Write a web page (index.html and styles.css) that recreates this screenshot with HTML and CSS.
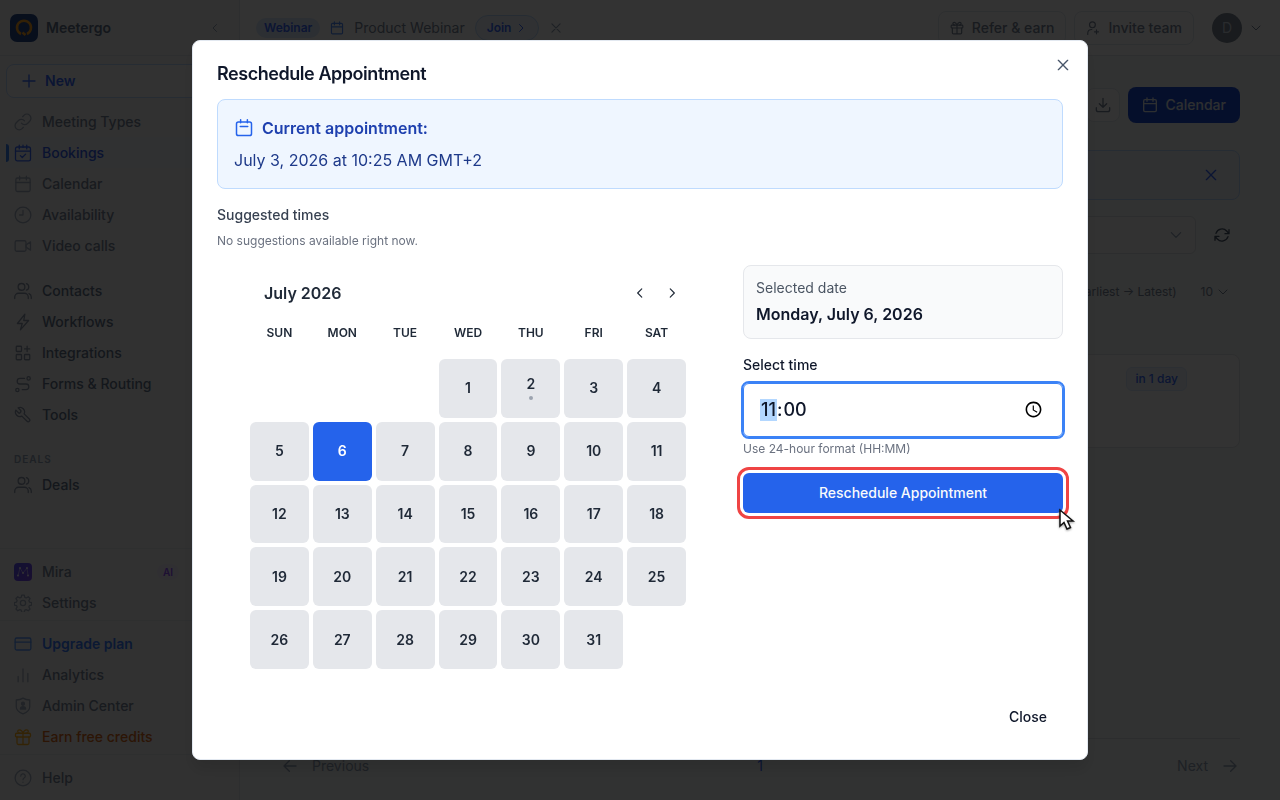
FILE: index.html
```
<!DOCTYPE html>
<html lang="en">
<head>
    <meta charset="UTF-8">
    <meta name="viewport" content="width=device-width, initial-scale=1.0">
    <title>Meetergo - Bookings</title>
    <link rel="stylesheet" href="styles.css">
</head>
<body>
    <!-- icon set -->
    <svg class="sprite" aria-hidden="true">
        <symbol id="i-link" viewBox="0 0 24 24"><path d="M10 13.500a5.500 5.500 0 0 0 8 .5l3-3a5.500 5.500 0 0 0-7.800-7.800l-1.700 1.700M14 10.500a5.500 5.500 0 0 0-8-.5l-3 3a5.500 5.500 0 0 0 7.800 7.800l1.700-1.700"/></symbol>
        <symbol id="i-cal" viewBox="0 0 24 24"><rect x="2.500" y="4" width="19" height="18" rx="2"/><path d="M2.500 10h19M7.500 1.500v5M16.500 1.500v5"/></symbol>
        <symbol id="i-calcheck" viewBox="0 0 24 24"><rect x="2" y="4" width="20" height="18.500" rx="2.500"/><path d="M2 9.500h20M7 1.500v5M12 1.500v3M17 1.500v5M8.500 15.500l2.500 2.500 4.500-4.500"/></symbol>
        <symbol id="i-calday" viewBox="0 0 24 24"><rect x="2" y="4" width="20" height="18" rx="2.500"/><path d="M7.500 1v4M16.500 1v4M7 10h10"/></symbol>
        <symbol id="i-clock" viewBox="0 0 24 24"><circle cx="12" cy="12" r="10.500"/><path d="M12 6v6H7.500"/></symbol>
        <symbol id="i-video" viewBox="0 0 24 24"><rect x="1.500" y="5" width="14.500" height="14" rx="2"/><path d="M16 10.500l6-4v11l-6-4z"/></symbol>
        <symbol id="i-users" viewBox="0 0 24 24"><circle cx="10" cy="6.500" r="4.500"/><path d="M1 22v-2a5 5 0 0 1 5-5h8a5 5 0 0 1 5 5v2M16.500 2.200a4.500 4.500 0 0 1 0 8.600M23 22v-2a5 5 0 0 0-3-4.500"/></symbol>
        <symbol id="i-bolt" viewBox="0 0 24 24"><path d="M14.500 1.500L4.500 14H11l-2.500 8.500L19.500 10H13z"/></symbol>
        <symbol id="i-grid" viewBox="0 0 24 24"><rect x="3" y="3" width="7" height="7" rx="1"/><rect x="3" y="14" width="7" height="7" rx="1"/><rect x="14" y="14" width="7" height="7" rx="1"/><path d="M17.500 3v7M14 6.500h7"/></symbol>
        <symbol id="i-route" viewBox="0 0 24 24"><circle cx="4.500" cy="20" r="2.200"/><circle cx="19.500" cy="4.500" r="2.200"/><path d="M14 4.500H8a3.700 3.700 0 0 0 0 7.500h8a3.700 3.700 0 0 1 0 7.500h-5"/></symbol>
        <symbol id="i-wrench" viewBox="0 0 24 24"><path d="M9.300 6.300a1 1 0 0 0 0 1.400l-1.600 1.600a1 1 0 0 1-1.400 0L2.500 5.500a6 6 0 0 0 8 8l6.900 6.900a2.100 2.100 0 0 0 3-3l-6.900-6.900a6 6 0 0 0-8-8z"/></symbol>
        <symbol id="i-gear" viewBox="0 0 24 24"><circle cx="12" cy="12" r="3.500"/><path d="M10.300 1.500h3.400l.7 3 1.900.8 2.700-1.600 2.400 2.400-1.600 2.600.8 2 3 .7v3.300l-3 .7-.8 1.900 1.600 2.700-2.400 2.400-2.700-1.600-1.900.8-.7 3h-3.400l-.7-3-1.900-.8-2.700 1.600-2.400-2.400 1.600-2.700-.8-1.900-3-.7v-3.300l3-.7.8-2-1.600-2.600 2.400-2.400 2.700 1.600 1.900-.8z"/></symbol>
        <symbol id="i-card" viewBox="0 0 24 24"><rect x="1.500" y="4" width="21" height="16" rx="2"/><path d="M1.500 9.500h21"/></symbol>
        <symbol id="i-bars" viewBox="0 0 24 24"><path d="M5.500 21v-7M12 21V4M18.500 21V10"/></symbol>
        <symbol id="i-shield" viewBox="0 0 24 24"><path d="M12 1.500c3 2 6 2.500 9 2.500v9c0 5-4 7.500-9 9.500-5-2-9-4.500-9-9.500V4c3 0 6-.5 9-2.500z"/><circle cx="12" cy="9" r="2" fill="currentColor"/><path d="M8.500 16c0-4 7-4 7 0z" fill="currentColor"/></symbol>
        <symbol id="i-gift" viewBox="0 0 24 24"><rect x="2" y="7" width="20" height="5" rx="1.500"/><path d="M4 12v8a2 2 0 0 0 2 2h12a2 2 0 0 0 2-2v-8M12 7v15M12 7C10 1 4.500 1.500 5 5c.2 1.500 1.500 2 3 2M12 7c2-6 7.500-5.500 7-2-.2 1.500-1.500 2-3 2"/></symbol>
        <symbol id="i-help" viewBox="0 0 24 24"><circle cx="12" cy="12" r="10.500"/><path d="M9 9.500a3 3 0 1 1 4.500 2.500c-1 .6-1.500 1.200-1.500 2.200M12 17.500v.3"/></symbol>
        <symbol id="i-plus" viewBox="0 0 24 24"><path d="M12 3v18M3 12h18"/></symbol>
        <symbol id="i-x" viewBox="0 0 24 24"><path d="M5 5l14 14M19 5L5 19"/></symbol>
        <symbol id="i-left" viewBox="0 0 24 24"><path d="M15 5l-7 7 7 7"/></symbol>
        <symbol id="i-right" viewBox="0 0 24 24"><path d="M9 5l7 7-7 7"/></symbol>
        <symbol id="i-down" viewBox="0 0 24 24"><path d="M4 8l8 8 8-8"/></symbol>
        <symbol id="i-useradd" viewBox="0 0 24 24"><circle cx="11" cy="6.500" r="5"/><path d="M3 23v-2c0-4 3-6.500 7-6.500M18 15v7M14.500 18.500h7"/></symbol>
        <symbol id="i-download" viewBox="0 0 24 24"><path d="M12 2v13M6.500 10l5.500 5.500 5.500-5.500M2 16v3a3 3 0 0 0 3 3h14a3 3 0 0 0 3-3v-3"/></symbol>
        <symbol id="i-refresh" viewBox="0 0 24 24"><path d="M22.500 4v6h-6M1.500 20v-6h6M3 9.500a9.500 9.500 0 0 1 16-3.500l3.500 4M21 14.500a9.500 9.500 0 0 1-16 3.500L1.500 14"/></symbol>
        <symbol id="i-arrow-l" viewBox="0 0 24 24"><path d="M21 12H4M11 4l-8 8 8 8"/></symbol>
        <symbol id="i-arrow-r" viewBox="0 0 24 24"><path d="M3 12h17M13 4l8 8-8 8"/></symbol>
    </svg>

    <div class="app">
        <aside class="sidebar">
            <div class="brand">
                <svg class="logo" viewBox="0 0 28 28" aria-hidden="true">
                    <rect width="28" height="28" rx="7" fill="#2a4a8c"/>
                    <path d="M11 20A7 7 0 1 1 17 20" fill="none" stroke="#ffa51f" stroke-width="2.500"/>
                    <path d="M12.500 18.500l3 2.500" stroke="#ffa51f" stroke-width="2.500"/>
                </svg>
                <span class="brand-name">Meetergo</span>
                <button class="icon-btn" aria-label="Collapse"><svg class="icon tiny"><use href="#i-left"/></svg></button>
            </div>
            <button class="new-btn"><svg class="icon small"><use href="#i-plus"/></svg>New</button>
            <nav class="nav">
                <a class="item" href="#"><svg class="icon"><use href="#i-link"/></svg>Meeting Types</a>
                <a class="item active" href="#"><svg class="icon"><use href="#i-calcheck"/></svg>Bookings</a>
                <a class="item" href="#"><svg class="icon"><use href="#i-cal"/></svg>Calendar</a>
                <a class="item" href="#"><svg class="icon"><use href="#i-clock"/></svg>Availability</a>
                <a class="item" href="#"><svg class="icon"><use href="#i-video"/></svg>Video calls</a>
            </nav>
            <nav class="nav dark">
                <a class="item" href="#"><svg class="icon"><use href="#i-users"/></svg>Contacts</a>
                <a class="item" href="#"><svg class="icon"><use href="#i-bolt"/></svg>Workflows</a>
                <a class="item" href="#"><svg class="icon"><use href="#i-grid"/></svg>Integrations</a>
                <a class="item" href="#"><svg class="icon"><use href="#i-route"/></svg>Forms &amp; Routing</a>
                <a class="item" href="#"><svg class="icon"><use href="#i-wrench"/></svg>Tools</a>
            </nav>
            <nav class="nav dark deals">
                <div class="nav-label">DEALS</div>
                <a class="item" href="#"><svg class="icon"><use href="#i-users"/></svg>Deals</a>
            </nav>
            <div class="bottom">
                <nav class="nav">
                    <a class="item" href="#">
                        <svg class="mira" viewBox="0 0 18 18" aria-hidden="true">
                            <defs><linearGradient id="mg" x1="0" y1="0" x2="1" y2="1"><stop offset="0" stop-color="#5b52f5"/><stop offset="1" stop-color="#7c4af0"/></linearGradient></defs>
                            <rect width="18" height="18" rx="4" fill="url(#mg)"/>
                            <path d="M4 12.500L6 5l3 5 4-5 1 7.500" fill="none" stroke="#c4b5fd" stroke-width=".8"/>
                            <g fill="#fff"><circle cx="4" cy="12.500" r=".9"/><circle cx="6" cy="5" r=".9"/><circle cx="9" cy="10" r=".9"/><circle cx="13" cy="5" r=".9"/><circle cx="14" cy="12.500" r=".9"/></g>
                        </svg>Mira<span class="ai">AI</span></a>
                    <a class="item" href="#"><svg class="icon"><use href="#i-gear"/></svg>Settings</a>
                </nav>
                <nav class="nav">
                    <a class="item upgrade" href="#"><svg class="icon"><use href="#i-card"/></svg>Upgrade plan</a>
                    <a class="item" href="#"><svg class="icon"><use href="#i-bars"/></svg>Analytics</a>
                    <a class="item" href="#"><svg class="icon"><use href="#i-shield"/></svg>Admin Center</a>
                    <a class="item earn" href="#"><svg class="icon"><use href="#i-gift"/></svg>Earn free credits</a>
                </nav>
                <nav class="nav">
                    <a class="item" href="#"><svg class="icon"><use href="#i-help"/></svg>Help</a>
                </nav>
            </div>
        </aside>

        <div class="main">
            <header class="topbar">
                <span class="tag">Webinar</span>
                <svg class="icon mid blue"><use href="#i-cal"/></svg>
                <span class="webinar-name">Product Webinar</span>
                <a class="join" href="#">Join<svg class="icon tiny"><use href="#i-right"/></svg></a>
                <button class="icon-btn dismiss" aria-label="Dismiss"><svg class="icon mid"><use href="#i-x"/></svg></button>
                <div class="top-right">
                    <button class="btn"><svg class="icon mid"><use href="#i-gift"/></svg>Refer &amp; earn</button>
                    <button class="btn"><svg class="icon mid"><use href="#i-useradd"/></svg>Invite team</button>
                    <span class="avatar">D</span>
                    <svg class="icon tiny"><use href="#i-down"/></svg>
                </div>
            </header>

            <main class="content">
                <div class="actions">
                    <button class="btn square" aria-label="Download"><svg class="icon small"><use href="#i-download"/></svg></button>
                    <button class="btn solid"><svg class="icon small"><use href="#i-cal"/></svg>Calendar</button>
                </div>
                <div class="banner"><button class="icon-btn" aria-label="Dismiss notice"><svg class="icon small"><use href="#i-x"/></svg></button></div>
                <div class="filters">
                    <button class="filter" aria-label="Filter"><svg class="icon mid"><use href="#i-down"/></svg></button>
                    <button class="icon-btn refresh" aria-label="Refresh"><svg class="icon small"><use href="#i-refresh"/></svg></button>
                </div>
                <div class="sort">
                    <span>(Earliest → Latest)</span>
                    <button class="page-size">10<svg class="icon tiny"><use href="#i-down"/></svg></button>
                </div>
                <div class="booking"><span class="due">in 1 day</span></div>
                <footer class="pagination">
                    <button class="page-btn"><svg class="icon small"><use href="#i-arrow-l"/></svg>Previous</button>
                    <span class="page-no">1</span>
                    <button class="page-btn next">Next<svg class="icon small"><use href="#i-arrow-r"/></svg></button>
                </footer>
            </main>
        </div>
    </div>

    <div class="overlay">
        <div class="modal" role="dialog" aria-labelledby="modalTitle">
            <button class="modal-x" aria-label="Close dialog"><svg class="icon small"><use href="#i-x"/></svg></button>
            <h2 id="modalTitle">Reschedule Appointment</h2>

            <div class="current">
                <div class="current-head"><svg class="icon"><use href="#i-calday"/></svg>Current appointment:</div>
                <div>July 3, 2026 at 10:25 AM GMT+2</div>
            </div>

            <div class="suggested">
                <h3>Suggested times</h3>
                <p class="hint">No suggestions available right now.</p>
            </div>

            <div class="columns">
                <div class="calendar">
                    <div class="cal-head">
                        <span class="month">July 2026</span>
                        <button class="cal-nav" aria-label="Previous month"><svg class="icon mid"><use href="#i-left"/></svg></button>
                        <button class="cal-nav" aria-label="Next month"><svg class="icon mid"><use href="#i-right"/></svg></button>
                    </div>
                    <div class="grid weekdays">
                        <span>SUN</span><span>MON</span><span>TUE</span><span>WED</span><span>THU</span><span>FRI</span><span>SAT</span>
                    </div>
                    <div class="grid" id="days"></div>
                </div>

                <div class="side">
                    <div class="selected-date">
                        <div class="muted">Selected date</div>
                        <div class="date">Monday, July 6, 2026</div>
                    </div>
                    <label for="time">Select time</label>
                    <input type="time" id="time" value="11:00">
                    <p class="hint">Use 24-hour format (HH:MM)</p>
                    <div class="submit-wrap">
                        <button class="submit">Reschedule Appointment</button>
                        <svg class="cursor" viewBox="0 0 18 24" aria-hidden="true"><path d="M2 2v16l4-3.500 3 6.500 3.500-1.500-3-6.500H15z" fill="#fff" stroke="#111" stroke-width="1.500"/></svg>
                    </div>
                </div>
            </div>

            <div class="modal-foot"><button class="close">Close</button></div>
        </div>
    </div>

    <script>
        // July 2026 starts on a Wednesday
        const days = document.getElementById("days");
        const today = 2;
        const selected = 6;

        for (let d = 1; d <= 31; d++) {
            const day = document.createElement("button");
            day.className = "day";
            day.textContent = d;
            if (d === 1) day.classList.add("first");
            if (d === today) day.classList.add("today");
            if (d === selected) day.classList.add("selected");
            days.appendChild(day);
        }
    </script>
</body>
</html>
```
FILE: styles.css
```
* {
    box-sizing: border-box;
}

body {
    margin: 0;
    font-family: Inter, "Liberation Sans", sans-serif;
    font-size: 14px;
    line-height: 20px;
    color: #0f172a;
    background: #fff;
}

button, input {
    font: inherit;
    color: inherit;
}

button {
    display: flex;
    align-items: center;
    justify-content: center;
    padding: 0;
    border: none;
    background: none;
    cursor: pointer;
}

a {
    color: inherit;
    text-decoration: none;
}

h2, h3, p {
    margin: 0;
}

.sprite {
    display: none;
}

.icon {
    width: 18px;
    height: 18px;
    flex: none;
    fill: none;
    stroke: currentColor;
    stroke-width: 2;
    stroke-linecap: round;
    stroke-linejoin: round;
}

.icon.small {
    width: 16px;
    height: 16px;
}

.icon.mid {
    width: 14px;
    height: 14px;
}

.icon.tiny {
    width: 12px;
    height: 12px;
}

.app {
    display: flex;
    height: 100vh;
    overflow: hidden;
}

/* sidebar */
.sidebar {
    display: flex;
    flex-direction: column;
    flex: none;
    width: 240px;
    background: #f5f5f5;
    border-right: 1px solid #e2e4e8;
}

.brand {
    display: flex;
    align-items: center;
    gap: 8px;
    height: 56px;
    padding: 0 18px 0 10px;
    border-bottom: 1px solid #e2e4e8;
}

.logo {
    width: 28px;
    height: 28px;
}

.brand-name {
    flex: 1;
    font-size: 14px;
    font-weight: 600;
    color: #64748b;
}

.icon-btn {
    color: #94a3b8;
}

.new-btn {
    justify-content: flex-start;
    gap: 8px;
    height: 34px;
    margin: 8px 6px;
    padding: 0 14px;
    border: 1px solid #bfdbfe;
    border-radius: 8px;
    background: #fafafa;
    color: #3b6cff;
    font-weight: 600;
}

.nav {
    padding: 0 6px;
    color: #7a8699;
}

.nav + .nav {
    margin-top: 14px;
}

.nav.dark {
    color: #64748b;
}

.item {
    display: flex;
    align-items: center;
    gap: 10px;
    height: 31px;
    padding: 0 8px;
    position: relative;
    font-weight: 500;
}

.item .icon {
    color: #a3afc0;
    stroke-width: 1.7;
}

.dark .item .icon {
    color: #8a95a8;
}

.item.active {
    color: #3560f0;
    background: #eff3fa;
}

.item.active .icon {
    color: #3b6cff;
}

.item.active::before {
    content: "";
    position: absolute;
    left: 0;
    top: 7px;
    width: 3px;
    height: 18px;
    border-radius: 0 3px 3px 0;
    background: #3b82f6;
}

.nav-label {
    padding: 3px 8px 0;
    font-size: 10px;
    font-weight: 600;
    letter-spacing: 1px;
    color: #94a3b8;
}

.nav + .nav.deals {
    margin-top: 16px;
}

.bottom {
    margin-top: auto;
    padding-bottom: 7px;
}

.bottom .nav {
    padding-top: 7px;
    border-top: 1px solid #e6e8ec;
}

.bottom .nav + .nav {
    margin-top: 2px;
}

.mira {
    width: 18px;
    height: 18px;
}

.ai {
    margin-left: auto;
    padding: 0 6px;
    margin-right: 46px;
    border-radius: 8px;
    background: #f0eaf8;
    color: #9350ff;
    font-size: 10px;
    line-height: 16px;
    font-weight: 600;
}

.item.upgrade {
    color: #3b7cff;
    font-weight: 600;
}

.item.upgrade .icon {
    color: #5a9bff;
}

.item.earn {
    color: #d9691a;
}

.item.earn .icon {
    color: #ffae1a;
}

/* page behind the dialog */
.main {
    display: flex;
    flex-direction: column;
    flex: 1;
    min-width: 0;
    background: #f5f8f7;
}

.topbar {
    display: flex;
    align-items: center;
    gap: 10px;
    height: 56px;
    padding: 0 18px 0 16px;
    background: #fff;
    border-bottom: 1px solid #e2e4e8;
}

.tag {
    padding: 0 8px;
    border-radius: 10px;
    background: #dbeafe;
    color: #3b6cff;
    font-size: 12px;
    font-weight: 600;
}

.blue {
    color: #4f8dff;
}

.webinar-name {
    color: #7a8699;
}

.join {
    display: flex;
    align-items: center;
    gap: 4px;
    padding: 2px 11px;
    border: 1px solid #bfdbfe;
    border-radius: 13px;
    background: #eff6ff;
    color: #3b6cff;
    font-size: 12px;
    font-weight: 600;
}

.top-right {
    display: flex;
    align-items: center;
    gap: 8px;
    margin-left: auto;
    color: #7a8699;
}

.btn {
    gap: 8px;
    height: 34px;
    padding: 0 11px;
    border: 1px solid #e2e8f0;
    border-radius: 8px;
    background: #fff;
    color: #7a8699;
    font-weight: 500;
}

.avatar {
    width: 30px;
    margin-left: 10px;
    border-radius: 50%;
    background: #7d8794;
    color: #cbd5e1;
    line-height: 30px;
    text-align: center;
}

.content {
    display: flex;
    flex-direction: column;
    flex: 1;
    padding: 31px 40px 24px;
}

.actions {
    display: flex;
    align-items: center;
    justify-content: flex-end;
    gap: 8px;
}

.btn.square {
    width: 34px;
    padding: 0;
}

.btn.solid {
    height: 36px;
    padding: 0 14px;
    border: none;
    background: #1d4ed8;
    color: #e2e8f0;
}

.banner {
    display: flex;
    justify-content: flex-end;
    height: 50px;
    margin-top: 27px;
    padding-right: 20px;
    border: 1px solid #bfdbfe;
    border-radius: 8px;
    background: #eff3fb;
}

.banner .icon-btn {
    color: #3b6cff;
}

.filters {
    display: flex;
    gap: 16px;
    margin-top: 16px;
}

.filter {
    flex: 1;
    justify-content: flex-end;
    height: 38px;
    padding-right: 12px;
    border: 1px solid #dcdfe4;
    border-radius: 6px;
    background: #fafafa;
    color: #94a3b8;
}

.refresh {
    width: 28px;
    padding-right: 8px;
    color: #475569;
}

.refresh .icon {
    overflow: visible;
}

.sort {
    display: flex;
    justify-content: flex-end;
    gap: 24px;
    margin-top: 28px;
    padding-right: 11px;
    font-size: 12px;
    color: #7a8699;
}

.page-size {
    gap: 4px;
}

.booking {
    display: flex;
    align-items: flex-start;
    justify-content: flex-end;
    height: 94px;
    margin-top: 52px;
    padding: 12px 52px;
    border: 1px solid #e2e4e8;
    border-radius: 8px;
    background: #fff;
}

.due {
    padding: 1px 8px;
    border: 1px solid #dbeafe;
    border-radius: 6px;
    background: #eff6ff;
    color: #3b6cff;
    font-size: 12px;
    font-weight: 500;
}

.pagination {
    display: grid;
    grid-template-columns: 1fr auto 1fr;
    align-items: center;
    margin-top: auto;
    padding: 17px 2px 0;
    border-top: 1px solid #dcdfe4;
    color: #94a3b8;
}

.page-btn {
    gap: 14px;
    justify-content: flex-start;
}

.page-btn.next {
    justify-content: flex-end;
}

.page-no {
    color: #3b6cff;
}

/* dialog */
.overlay {
    position: fixed;
    inset: 0;
    display: flex;
    align-items: center;
    justify-content: center;
    background: rgba(0, 0, 0, 0.8);
}

.modal {
    display: flex;
    flex-direction: column;
    gap: 16px;
    position: relative;
    width: 70%;
    max-width: 896px;
    min-width: 760px;
    padding: 24px;
    border: 1px solid #e2e8f0;
    border-radius: 8px;
    background: #fff;
    box-shadow: 0 10px 15px rgba(0, 0, 0, 0.1);
}

.modal-x {
    position: absolute;
    top: 16px;
    right: 16px;
    color: #475569;
}

.modal h2 {
    font-size: 18px;
    line-height: 18px;
    font-weight: 600;
    letter-spacing: -0.025em;
}

.current {
    display: flex;
    flex-direction: column;
    gap: 8px;
    padding: 16px;
    border: 1px solid #bfdbfe;
    border-radius: 8px;
    background: #eff6ff;
    color: #1e3a8a;
    font-size: 16px;
    line-height: 24px;
}

.current-head {
    display: flex;
    align-items: center;
    gap: 8px;
    font-weight: 600;
    color: #1e40af;
}

.current-head .icon {
    width: 20px;
    color: #2563eb;
}

.suggested {
    display: flex;
    flex-direction: column;
    gap: 8px;
}

.suggested h3 {
    font-size: 14px;
    font-weight: 500;
    color: #374151;
}

.hint {
    font-size: 12px;
    line-height: 16px;
    color: #6b7280;
}

.columns {
    display: flex;
    align-items: flex-start;
    gap: 24px;
}

.calendar {
    flex: 1;
    padding: 14px 33px;
    color: #1f2937;
}

.cal-head {
    display: flex;
    align-items: center;
    gap: 4px;
    padding-left: 14px;
}

.month {
    flex: 1;
    font-size: 16px;
    font-weight: 600;
}

.cal-nav {
    width: 28px;
    height: 28px;
}

.grid {
    display: grid;
    grid-template-columns: repeat(7, 1fr);
    gap: 4px;
}

.weekdays {
    margin: 18px 0;
    font-size: 12px;
    line-height: 16px;
    font-weight: 600;
    text-align: center;
}

.day {
    flex-direction: column;
    aspect-ratio: 1;
    border-radius: 6px;
    background: #e5e7eb;
    font-weight: 600;
}

.day.first {
    grid-column-start: 4;
}

.day.today {
    padding-bottom: 2px;
}

.day.today::after {
    content: "";
    width: 4px;
    height: 4px;
    margin-top: 2px;
    border-radius: 50%;
    background: #9ca3af;
}

.day.selected {
    background: #2563eb;
    color: #fff;
}

.side {
    display: flex;
    flex-direction: column;
    flex: none;
    width: 320px;
}

.selected-date {
    display: flex;
    flex-direction: column;
    gap: 4px;
    padding: 12px;
    border: 1px solid #e5e7eb;
    border-radius: 8px;
    background: #f9fafb;
}

.muted {
    color: #4b5563;
}

.date {
    font-size: 16px;
    line-height: 24px;
    font-weight: 600;
}

.side label {
    margin: 16px 0 8px;
    font-weight: 500;
}

.side input {
    height: 54px;
    padding: 0 16px;
    border: 1px solid #3b82f6;
    border-radius: 6px;
    outline: 2px solid #3b82f6;
    background: #fff;
    font-size: 18px;
    font-weight: 500;
}

.side input::-webkit-datetime-edit-hour-field {
    background: #b3d7ff;
    color: #0f172a;
}

/* 24-hour display */
.side input::-webkit-datetime-edit-ampm-field {
    display: none;
}

.side .hint {
    margin: 4px 0 16px;
}

.submit-wrap {
    position: relative;
}

.submit {
    width: 100%;
    height: 40px;
    border-radius: 6px;
    outline: 3px solid #ef4444;
    outline-offset: 3px;
    background: #2563eb;
    color: #f8fafc;
    font-weight: 500;
}

.cursor {
    position: absolute;
    right: -13px;
    bottom: -19px;
    width: 18px;
    height: 24px;
    filter: drop-shadow(0 1px 1px rgba(0, 0, 0, 0.4));
}

.modal-foot {
    display: flex;
    justify-content: flex-end;
}

.close {
    height: 36px;
    padding: 0 16px;
    font-weight: 500;
}
```
